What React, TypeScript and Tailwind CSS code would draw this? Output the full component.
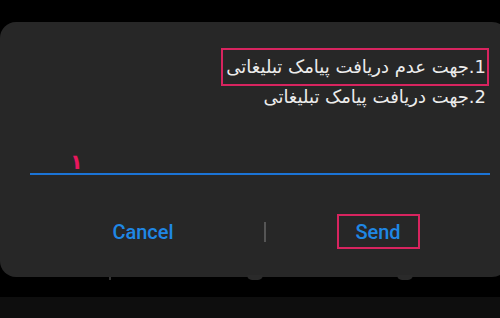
import React from "react";

export default function App() {
  return (
    <div className="w-[500px] h-[318px] bg-black overflow-hidden flex flex-col">
      <div className="h-[22px] shrink-0" />
      <div className="w-[508px] h-[255px] shrink-0 bg-[#272727] rounded-[16px] flex flex-col">
        <div
          dir="rtl"
          className="flex flex-col items-start pr-[19px] pt-[26px] text-[#ececec] text-[18px] leading-[26px]"
          style={{ fontFamily: '"DejaVu Sans", "Noto Sans", sans-serif' }}
        >
          <div className="border-2 border-[#d8245f] h-[38px] flex items-center pr-[1px] pl-[3px]">
            1.جهت عدم دریافت پیامک تبلیغاتی
          </div>
          <div className="pr-[3px] -mt-[2px]">2.جهت دریافت پیامک تبلیغاتی</div>
        </div>
        <div className="mt-[40px] ml-[30px] w-[460px] h-[25px] border-b-2 border-[#1b74d6] relative">
          <span
            className="absolute left-[40px] top-[3px] text-[#e8175d] text-[21px] leading-[18px] font-bold"
            style={{ fontFamily: '"DejaVu Sans", sans-serif' }}
          >
            ١
          </span>
        </div>
        <div
          className="mt-[39px] pl-[22px] flex items-center h-[35px]"
          style={{ fontFamily: 'Roboto, "Liberation Sans", sans-serif' }}
        >
          <div className="w-[242px] flex justify-center">
            <span className="text-[#1f87e5] text-[20px] font-medium">Cancel</span>
          </div>
          <div className="w-[2px] h-[20px] bg-[#555555]" />
          <div className="w-[224px] flex justify-center">
            <div className="w-[83px] h-[35px] border-2 border-[#d8245f] flex items-center justify-center">
              <span className="text-[#1f87e5] text-[20px] font-medium">Send</span>
            </div>
          </div>
        </div>
      </div>
      <div className="h-[20px] shrink-0 relative">
        <div className="absolute left-[109px] top-0 w-[2px] h-[3px] bg-[#333]" />
        <div className="absolute left-[247px] -top-[2px] w-[16px] h-[5px] rounded-b-full bg-[#2a2a2a]" />
        <div className="absolute left-[397px] -top-[2px] w-[16px] h-[5px] rounded-b-full bg-[#2a2a2a]" />
      </div>
      <div className="flex-1 bg-[#0e0e0e]" />
    </div>
  );
}
